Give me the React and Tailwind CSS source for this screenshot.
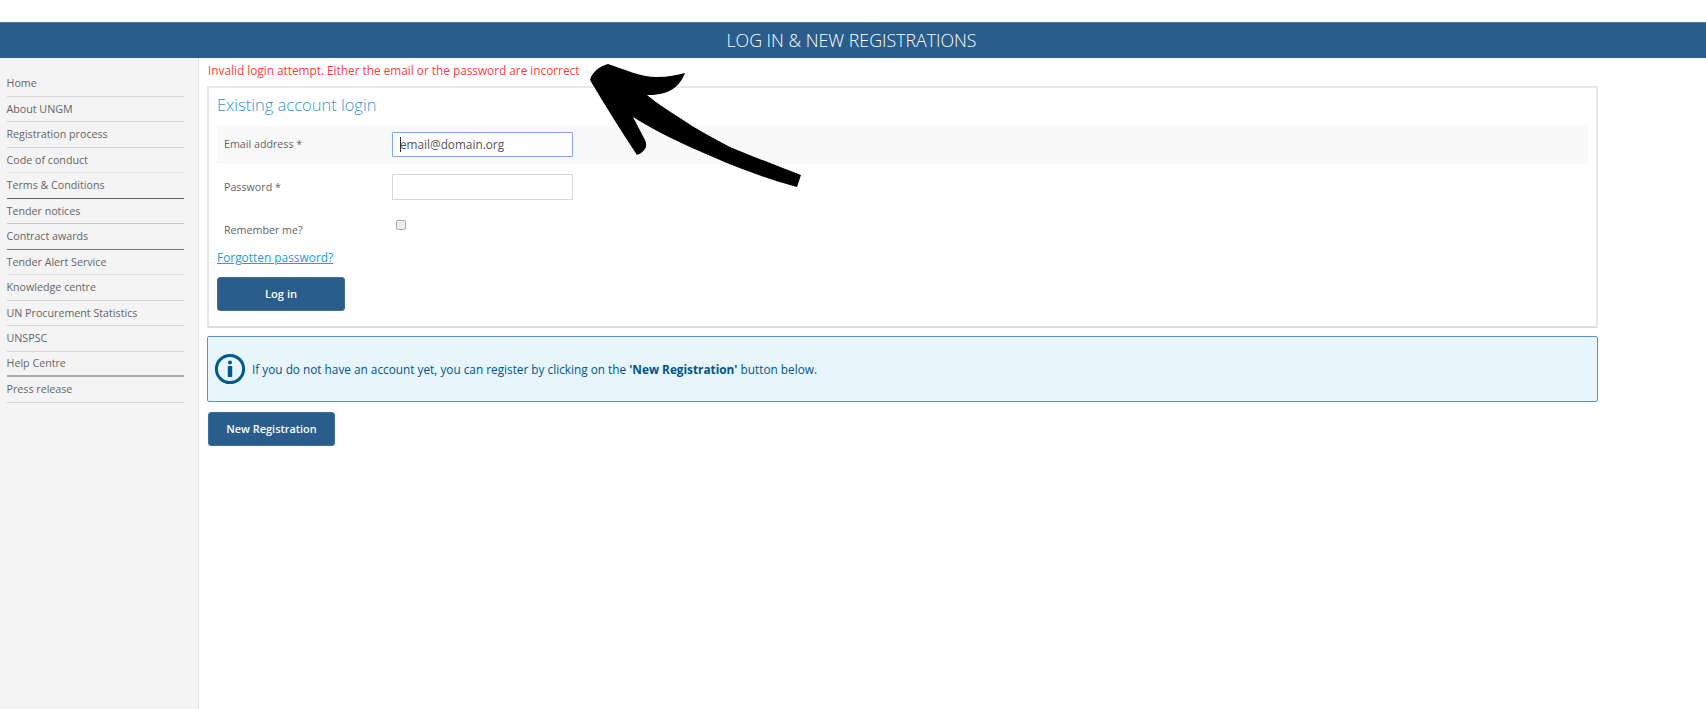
import React from 'react';

const navItems = [
  { label: 'Home', line: 'border-[#d4d4d4]' },
  { label: 'About UNGM', line: 'border-[#d4d4d4]' },
  { label: 'Registration process', line: 'border-[#d4d4d4]' },
  { label: 'Code of conduct', line: 'border-[#e0e0e0]' },
  { label: 'Terms & Conditions', line: 'border-[#666666]' },
  { label: 'Tender notices', line: 'border-[#cccccc]' },
  { label: 'Contract awards', line: 'border-[#777777]' },
  { label: 'Tender Alert Service', line: 'border-[#e0e0e0]' },
  { label: 'Knowledge centre', line: 'border-[#d4d4d4]' },
  { label: 'UN Procurement Statistics', line: 'border-[#d4d4d4]' },
  { label: 'UNSPSC', line: 'border-[#d4d4d4]' },
  { label: 'Help Centre', line: 'border-[#aaaaaa] border-b-2' },
  { label: 'Press release', line: 'border-[#d4d4d4]' },
];

const InfoIcon = () => (
  <svg width="32" height="32" viewBox="0 0 32 32" className="shrink-0">
    <circle cx="16" cy="16" r="13.6" fill="none" stroke="#005a8e" strokeWidth="3" />
    <circle cx="16" cy="9.6" r="2" fill="#005a8e" />
    <rect x="13.8" y="13" width="4.4" height="11" rx="0.6" fill="#005a8e" />
  </svg>
);

const Arrow = () => (
  <svg
    width="230"
    height="135"
    viewBox="0 0 230 135"
    className="absolute left-[580px] top-[60px]"
  >
    <path
      fill="#000000"
      d="M10 20 C12 12 20 6 28 4 C44 9 60 17 77 17 C88 17 97 15 105 13 C101 24 92 32 80 34 C75 35 71 35 67 35 C78 44 89 51 100 58 C116 69 133 78 150 87 C174 97 198 106 221 115 L217 127 C188 119 160 109 133 97 C105 85 78 73 53 57 L65 80 C67 84 66 88 65 89 C63 92 60 94 57 95 C41 71 25 45 10 20 Z"
    />
  </svg>
);

export default function App() {
  return (
    <div className="relative h-screen overflow-hidden bg-white pt-[22px] font-['Open_Sans',sans-serif] text-[10.7px] text-[#666666]">
      <header className="flex h-[36px] items-center justify-center border-t border-[#4f7497] bg-[#2a5d8c] pr-[3px] text-[17.75px] font-light text-white">
        LOG IN &amp; NEW REGISTRATIONS
      </header>

      <div className="flex h-[651px]">
        <aside className="w-[199px] shrink-0 border-r border-[#e2e2e2] bg-[#f4f4f4] pl-[6.5px] pr-[14px] pt-[13px]">
          <ul>
            {navItems.map((item) => (
              <li
                key={item.label}
                className={`flex h-[25.5px] items-center border-b ${item.line}`}
              >
                {item.label}
              </li>
            ))}
          </ul>
        </aside>

        <main className="w-[1391px] pl-[8px] pt-0">
          <div className="flex h-[28px] items-center pb-[2px] pl-px text-[11.8px] text-[#fb4040]">
            Invalid login attempt. Either the email or the password are incorrect
          </div>

          <section className="h-[242px] w-[1391px] border-2 border-[#e8e8e8] border-b-[#dddddd] px-[8px]">
            <h2 className="flex h-[37px] items-center pb-[3px] text-[16.5px] font-light text-[#2a9bd6]">
              Existing account login
            </h2>

            <div className="flex h-[39px] items-center bg-[#f9f9f9] pl-[7px]">
              <label className="w-[168px]">Email address *</label>
              <div className="flex h-[25px] w-[181px] items-center rounded-[1px] border border-[#7ea9f0] bg-white pl-[7px] text-[11.8px] text-[#555555]">
                <span className="h-[15px] w-px bg-[#333333]" />
                <span className="-ml-px">email@domain.org</span>
              </div>
            </div>

            <div className="flex h-[43px] items-center pl-[7px] pt-[3px]">
              <label className="w-[168px]">Password *</label>
              <div className="h-[26px] w-[181px] border border-[#d8d8d8] bg-white" />
            </div>

            <div className="flex h-[42px] pl-[7px]">
              <label className="w-[172px] pt-[15px]">Remember me?</label>
              <div className="mt-[13px] h-[10px] w-[10px] rounded-[2px] border border-[#aaaaaa] bg-[#eeeeee]" />
            </div>

            <a href="#" className="block h-[28px] text-[11.9px] leading-[16px] text-[#2a9bd6] underline">
              Forgotten password?
            </a>

            <button className="block h-[34px] w-[128px] rounded-[3px] border border-[#3f6f9c] bg-[#2a5d8c] text-[11.2px] font-semibold text-white">
              Log in
            </button>
          </section>

          <div className="mt-[8px] flex h-[66px] w-[1391px] items-center gap-[6px] rounded-[2px] border border-[#5b94bd] bg-[#e8f5fd] pl-[6px] text-[11.8px] text-[#00568a]">
            <InfoIcon />
            <p className="pt-px">
              If you do not have an account yet, you can register by clicking on the{' '}
              <strong className="font-bold">'New Registration'</strong> button below.
            </p>
          </div>

          <button className="ml-px mt-[10px] block h-[34px] w-[127px] rounded-[3px] border border-[#3f6f9c] bg-[#2a5d8c] text-[10.9px] font-semibold text-white">
            New Registration
          </button>
        </main>
      </div>

      <Arrow />
    </div>
  );
}
